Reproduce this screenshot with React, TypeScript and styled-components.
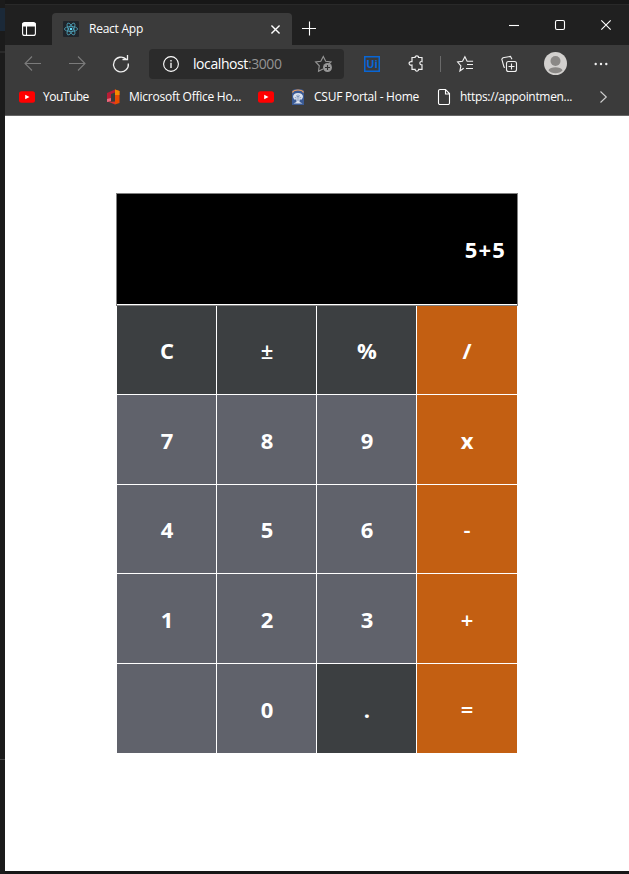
import React from "react";
import styled, { createGlobalStyle } from "styled-components";

const GlobalStyle = createGlobalStyle`
  * { box-sizing: border-box; }
  html, body { margin: 0; padding: 0; background: #1b1b1b; overflow: hidden; }
  body { font-family: "Open Sans", "Noto Sans", sans-serif; }
  svg { display: block; flex: none; overflow: visible; }
`;

const Desktop = styled.div`
  display: grid;
  grid-template-columns: 5px 1fr;
  width: 629px;
  height: 874px;
  background: #1b1b1b;
`;

const EditorEdge = styled.div`
  display: grid;
  grid-template-rows: 8px 23px 20px 2px 706px 1px;
  background: #1b1b1b;
`;

const EdgeBand = styled.div<{ $color: string }>`
  background: ${(p) => p.$color};
`;

const BrowserWindow = styled.div`
  display: grid;
  grid-template-rows: 4px 41px 37px 34px 755px 3px;
  min-width: 0;
  background: #171717;
`;

const TitleBar = styled.div`
  display: flex;
  background: #202020;
  border-top: 1px solid #292929;
  color: #fff;
`;

const TabActions = styled.div`
  width: 47px;
  padding: 17px 0 0 17px;
`;

const Tab = styled.div`
  display: flex;
  align-items: center;
  width: 240px;
  height: 32px;
  margin-top: 8px;
  padding: 0 12px 0 11px;
  border-radius: 4px 4px 0 0;
  background: #3b3b3b;
`;

const TabTitle = styled.span`
  flex: 1;
  margin-left: 10px;
  font-size: 12px;
  line-height: 16px;
  letter-spacing: -0.25px;
`;

const NewTab = styled.div`
  padding: 15px 0 0 10px;
`;

const WindowControls = styled.div`
  display: flex;
  gap: 36px;
  margin-left: auto;
  padding: 14px 18px 0 0;
`;

const Toolbar = styled.div`
  display: flex;
  align-items: center;
  padding-left: 19px;
  background: #3b3b3b;
  color: #fff;
`;

const ToolIcon = styled.div<{ $gap: number; $color?: string }>`
  margin-left: ${(p) => p.$gap}px;
  color: ${(p) => p.$color ?? "#f0f0f0"};
`;

const AddressBar = styled.div`
  display: flex;
  align-items: center;
  width: 195px;
  height: 30px;
  margin-left: 19px;
  padding: 0 11px 0 14px;
  border-radius: 4px;
  background: #2b2b2b;
`;

const Address = styled.span`
  flex: 1;
  margin-left: 14px;
  font-size: 14px;
  line-height: 20px;
  letter-spacing: -0.42px;
  white-space: nowrap;
`;

const Port = styled.span`
  color: #949494;
`;

const Divider = styled.div`
  width: 1px;
  height: 16px;
  margin-left: 16px;
  background: #6a6a6a;
`;

const BookmarksBar = styled.div`
  display: flex;
  align-items: center;
  padding: 0 22px 3px 14px;
  border-bottom: 1px solid #666;
  background: #3b3b3b;
  color: #fff;
`;

const Bookmark = styled.div<{ $width: number; $spacing?: number; $gap?: number }>`
  display: flex;
  align-items: center;
  gap: ${(p) => p.$gap ?? 8}px;
  width: ${(p) => p.$width}px;
  font-size: 12px;
  line-height: 16px;
  letter-spacing: ${(p) => p.$spacing ?? 0}px;
  white-space: nowrap;
`;

const MoreBookmarks = styled.div`
  margin-left: auto;
  color: #d0d0d0;
`;

const Page = styled.main`
  padding: 77px 0 0 111px;
  background: #fff;
`;

const Calculator = styled.div`
  width: 402px;
`;

const Display = styled.div`
  height: 113px;
  padding-bottom: 1px;
  border: 1px solid #808080;
  background: #fff;
`;

const Screen = styled.div`
  display: flex;
  align-items: center;
  justify-content: flex-end;
  height: 110px;
  padding: 0 11px 0 0;
  background: #000;
  color: #fff;
  font-size: 22px;
  font-weight: 700;
  letter-spacing: 1.2px;
`;

const Keypad = styled.div`
  display: grid;
  grid-template-columns: 99px 99px 99px 100px;
  grid-template-rows: 88px 89px 88px 89px 89px;
  gap: 1px;
  width: 400px;
  margin-left: 1px;
  background: #fff;
`;

const keyColors = { dark: "#3c3f41", number: "#60626b", operator: "#c35f12" };
type Tone = keyof typeof keyColors;

const Key = styled.button<{ $tone: Tone; $light: boolean }>`
  display: flex;
  align-items: center;
  justify-content: center;
  border: 0;
  padding: ${(p) => (p.$tone === "operator" ? "0" : "0 0 0 1px")};
  background: ${(p) => keyColors[p.$tone]};
  color: #fff;
  font: ${(p) => (p.$light ? 600 : 700)} 22px "Open Sans", "Noto Sans", sans-serif;
`;

const line = { fill: "none", stroke: "currentColor", strokeWidth: 1.1 } as const;

const TabMenuIcon = () => (
  <svg width="14" height="14" {...line}>
    <rect x=".6" y=".6" width="12.8" height="12.8" rx="2" />
    <path d="M1 1.5h12v2.4H1z" fill="currentColor" />
    <path d="M4.5 4v9" />
  </svg>
);

const ReactIcon = () => (
  <svg width="16" height="16" viewBox="0 0 16 16">
    <rect width="16" height="16" rx="1" fill="#20252b" />
    <g fill="none" stroke="#4fa5bd" strokeWidth=".8">
      <ellipse cx="8" cy="8" rx="6.6" ry="2.5" />
      <ellipse cx="8" cy="8" rx="6.6" ry="2.5" transform="rotate(60 8 8)" />
      <ellipse cx="8" cy="8" rx="6.6" ry="2.5" transform="rotate(120 8 8)" />
    </g>
    <circle cx="8" cy="8" r="1.3" fill="#61dafb" />
  </svg>
);

const CloseIcon = ({ size, width = 1.1 }: { size: number; width?: number }) => (
  <svg width={size} height={size} viewBox="0 0 10 10" {...line} strokeWidth={(width * 10) / size}>
    <path d="m.5.5 9 9m0-9-9 9" />
  </svg>
);

const PlusIcon = () => (
  <svg width="14" height="14" {...line}><path d="M0 8.5h14M7.5 1.5v14" /></svg>
);
const MinimizeIcon = () => (
  <svg width="10" height="11" {...line}><path d="M0 6.5h10" /></svg>
);
const MaximizeIcon = () => (
  <svg width="10" height="11" {...line}><rect x=".5" y="1.5" width="9" height="9" rx="1.5" /></svg>
);
const WindowCloseIcon = () => (
  <svg width="10" height="11" {...line}><path d="m.3 1.3 9.4 9.4m0-9.4L.3 10.7" /></svg>
);

const ArrowIcon = ({ forward = false }: { forward?: boolean }) => (
  <svg width="17" height="16" {...line}>
    <path d={forward ? "M0 7.5h16M9 .5l7 7-7 7" : "M17 7.5H1M8 .5l-7 7 7 7"} />
  </svg>
);

const RefreshIcon = () => (
  <svg width="18" height="18" {...line} strokeWidth={1.3}>
    <path d="M16.3 8.5A7.4 7.4 0 1 1 14 4.1M10.5 4.5h5V0" />
  </svg>
);

const InfoIcon = () => (
  <svg width="16" height="16" {...line}>
    <circle cx="8" cy="8" r="7.4" />
    <path d="M8 6.8V12M8 4v1.5" strokeWidth="1.3" />
  </svg>
);

const FavoriteAddIcon = () => (
  <svg width="18" height="17" {...line}>
    <path d="M8 14 3.5 16.2l.8-5.4L.6 7l5.2-.8L8.3 1.4l2.4 4.8L16 7l-2 2" />
    <circle cx="12.5" cy="12.5" r="4.5" fill="currentColor" stroke="none" />
    <path d="M10 12.5h5M12.5 10v5" stroke="#2b2b2b" />
  </svg>
);

const UiBadge = styled.div`
  display: flex;
  align-items: center;
  justify-content: center;
  width: 16px;
  height: 16px;
  margin-left: 20px;
  border: 1.5px solid #0866d6;
  box-shadow: inset 0 0 0 0.5px #0866d6;
  color: #0866d6;
  font-size: 11px;
  line-height: 12px;
  font-weight: 700;
`;

const PuzzleIcon = () => (
  <svg width="16" height="17" {...line} strokeWidth={1.2}>
    <path d="M4 2.5h3.1c-.2-2.1 3.7-2.1 3.5 0H14v4.1c-2.5-.7-3.1 3.4 0 3.3v4.5h-3.4c.1 2.2-3.6 2.2-3.5 0H4V10C.1 10.7.1 5.9 4 6.6Z" />
  </svg>
);

const FavoritesIcon = () => (
  <svg width="17" height="16" {...line}>
    <path d="M6.7 12.2 2.9 15l1-5.2L.6 6l4.9-.7L7.9.8l2.2 4.5h6M10 8.5h6M9 12.5h7" />
  </svg>
);

const CollectionsIcon = () => (
  <svg width="16" height="16" {...line}>
    <path d="M4 11.5 3 11 .8 3.2 2 1.7l7.5-1.3L11 3.3" />
    <rect x="5.5" y="5.5" width="10" height="10" rx="2" fill="#3b3b3b" />
    <path d="M7.5 10.5h6M10.5 7.5v6" />
  </svg>
);

const ProfileIcon = () => (
  <svg width="23" height="23" viewBox="0 0 23 23">
    <circle cx="11.5" cy="11.5" r="11.5" fill="#d2d0ce" />
    <circle cx="11.5" cy="9" r="5" fill="#8a8886" />
    <path d="M4.4 18.2c1.5-4.1 12.7-4.1 14.2 0-2.8 4-11.4 4-14.2 0Z" fill="#8a8886" />
  </svg>
);

const MoreIcon = () => (
  <svg width="14" height="4" fill="currentColor">
    <circle cx="1.7" cy="2" r="1.2" /><circle cx="7" cy="2" r="1.2" /><circle cx="12.3" cy="2" r="1.2" />
  </svg>
);

const YouTubeIcon = () => (
  <svg width="16" height="12">
    <rect y=".2" width="16" height="11.5" rx="2.5" fill="#f00" />
    <path d="m6.2 3.7 4.3 2.3-4.3 2.3Z" fill="#fff" />
  </svg>
);

const OfficeIcon = () => (
  <svg width="13" height="16" viewBox="0 0 13 16">
    <path d="M0 4 8 .4v3.2L4 5v7.2l-4 .8Z" fill="#b91c35" />
    <path d="m0 10 4-1v3.2L0 13Z" fill="#e9687c" />
    <path d="m2 13 6-.5v3.1Z" fill="#d9302f" />
    <path d="M8 .4 12.5 2v12L8 15.6Z" fill="#e84a00" />
    <path d="M8 .4 12.5 2v4H8Z" fill="#f28a00" />
  </svg>
);

const CampusIcon = () => (
  <svg width="12" height="16" viewBox="0 0 12 16">
    <path d="M0 1.5 2.5.2h7L12 1.5V16H0Z" fill="#3a5a94" />
    <path d="M.5 3.4C2 .2 10 .2 11.5 3.4" fill="none" stroke="#f5a35c" strokeWidth="1.2" />
    <path d="M1 8C1 5.3 3 4 6 4s5 1.3 5 4l-1.2 2.5H7.6V13l3 1.5H1.4l3-1.5v-2.5H2.2Z" fill="#d9e1ef" />
    <path d="M4 6.5 6 8l2-1.5M6 5.5V12M2.8 8.5l1.8.5m4.6-.5L7.4 9" fill="none" stroke="#5f7cad" strokeWidth=".7" />
  </svg>
);

const PageIcon = () => (
  <svg width="12" height="16" {...line}>
    <path d="M2 .5h5.5l4 4v9.5a1.5 1.5 0 0 1-1.5 1.5H2A1.5 1.5 0 0 1 .5 14V2A1.5 1.5 0 0 1 2 .5ZM7.5.5V5h4" />
  </svg>
);

const ChevronIcon = () => (
  <svg width="7" height="12" {...line}><path d="m.5.5 5.8 5.5L.5 11.5" /></svg>
);

const keys: [string, Tone][] = [
  ["C", "dark"], ["±", "dark"], ["%", "dark"], ["/", "operator"],
  ["7", "number"], ["8", "number"], ["9", "number"], ["x", "operator"],
  ["4", "number"], ["5", "number"], ["6", "number"], ["-", "operator"],
  ["1", "number"], ["2", "number"], ["3", "number"], ["+", "operator"],
  ["", "number"], ["0", "number"], [".", "dark"], ["=", "operator"],
];

export default function App() {
  return (
    <>
      <GlobalStyle />
      <Desktop>
        <EditorEdge>
          <EdgeBand $color="#1b1b1b" />
          <EdgeBand $color="#1b2938" />
          <EdgeBand $color="#1b1b1b" />
          <EdgeBand $color="#292929" />
          <EdgeBand $color="#1b1b1b" />
          <EdgeBand $color="#444" />
        </EditorEdge>
        <BrowserWindow>
          <div />
          <TitleBar>
            <TabActions><TabMenuIcon /></TabActions>
            <Tab>
              <ReactIcon />
              <TabTitle>React App</TabTitle>
              <CloseIcon size={9} width={1.4} />
            </Tab>
            <NewTab><PlusIcon /></NewTab>
            <WindowControls>
              <MinimizeIcon />
              <MaximizeIcon />
              <WindowCloseIcon />
            </WindowControls>
          </TitleBar>
          <Toolbar>
            <ToolIcon $gap={0} $color="#7b7b7b"><ArrowIcon /></ToolIcon>
            <ToolIcon $gap={28} $color="#7b7b7b"><ArrowIcon forward /></ToolIcon>
            <ToolIcon $gap={26}><RefreshIcon /></ToolIcon>
            <AddressBar>
              <InfoIcon />
              <Address>localhost<Port>:3000</Port></Address>
              <ToolIcon $gap={0} $color="#969696"><FavoriteAddIcon /></ToolIcon>
            </AddressBar>
            <UiBadge>Ui</UiBadge>
            <ToolIcon $gap={28}><PuzzleIcon /></ToolIcon>
            <Divider />
            <ToolIcon $gap={16}><FavoritesIcon /></ToolIcon>
            <ToolIcon $gap={27}><CollectionsIcon /></ToolIcon>
            <ToolIcon $gap={27}><ProfileIcon /></ToolIcon>
            <ToolIcon $gap={27}><MoreIcon /></ToolIcon>
          </Toolbar>
          <BookmarksBar>
            <Bookmark $width={88} $spacing={-0.5}><YouTubeIcon />YouTube</Bookmark>
            <Bookmark $width={151} $spacing={-0.25} $gap={9}><OfficeIcon />Microsoft Office Ho...</Bookmark>
            <Bookmark $width={34}><YouTubeIcon /></Bookmark>
            <Bookmark $width={146} $spacing={-0.25} $gap={10}><CampusIcon />CSUF Portal - Home</Bookmark>
            <Bookmark $width={140} $spacing={-0.32} $gap={10}><PageIcon />https://appointmen...</Bookmark>
            <MoreBookmarks><ChevronIcon /></MoreBookmarks>
          </BookmarksBar>
          <Page>
            <Calculator>
              <Display><Screen>5+5</Screen></Display>
              <Keypad>
                {keys.map(([label, tone], index) => (
                  <Key key={index} $tone={tone} $light={"±+=-".includes(label)}>{label}</Key>
                ))}
              </Keypad>
            </Calculator>
          </Page>
        </BrowserWindow>
      </Desktop>
    </>
  );
}
